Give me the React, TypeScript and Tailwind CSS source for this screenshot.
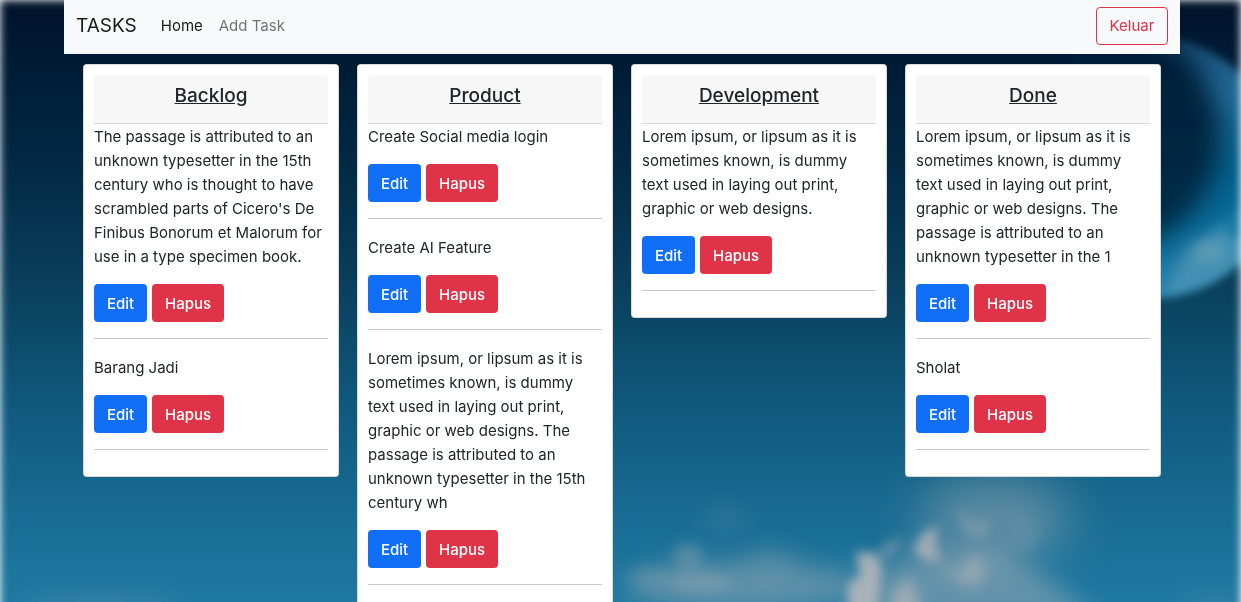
type Column = { title: string; tasks: string[] };

const columns: Column[] = [
  {
    title: "Backlog",
    tasks: [
      "The passage is attributed to an unknown typesetter in the 15th century who is thought to have scrambled parts of Cicero's De Finibus Bonorum et Malorum for use in a type specimen book.",
      "Barang Jadi",
    ],
  },
  {
    title: "Product",
    tasks: [
      "Create Social media login",
      "Create AI Feature",
      "Lorem ipsum, or lipsum as it is sometimes known, is dummy text used in laying out print, graphic or web designs. The passage is attributed to an unknown typesetter in the 15th century wh",
    ],
  },
  {
    title: "Development",
    tasks: [
      "Lorem ipsum, or lipsum as it is sometimes known, is dummy text used in laying out print, graphic or web designs.",
    ],
  },
  {
    title: "Done",
    tasks: [
      "Lorem ipsum, or lipsum as it is sometimes known, is dummy text used in laying out print, graphic or web designs. The passage is attributed to an unknown typesetter in the 1",
      "Sholat",
    ],
  },
];

function NightSky() {
  return (
    <div className="fixed inset-0 -z-10 overflow-hidden bg-white" aria-hidden="true">
      <svg
        className="absolute inset-x-0 top-0 h-[calc(100%+20px)] w-full blur-[4px]"
        viewBox="0 0 1241 622"
        preserveAspectRatio="none"
      >
        <defs>
          <linearGradient id="sky" x1="0" y1="0" x2="0" y2="1">
            <stop offset="0" stopColor="#00132b" />
            <stop offset="0.1" stopColor="#001b34" />
            <stop offset="0.27" stopColor="#032a46" />
            <stop offset="0.48" stopColor="#0a425f" />
            <stop offset="0.64" stopColor="#0f587c" />
            <stop offset="0.8" stopColor="#17698f" />
            <stop offset="1" stopColor="#217ca6" />
          </linearGradient>
          <linearGradient id="moon" x1="0" y1="0" x2="0" y2="1">
            <stop offset="0" stopColor="#154a72" />
            <stop offset="0.22" stopColor="#236c98" />
            <stop offset="0.5" stopColor="#02608c" />
            <stop offset="0.7" stopColor="#0a6c98" />
            <stop offset="1" stopColor="#2f86b0" />
          </linearGradient>
          <linearGradient id="shade" x1="0" y1="0" x2="0" y2="1">
            <stop offset="0" stopColor="#001a33" />
            <stop offset="1" stopColor="#06304c" />
          </linearGradient>
          <clipPath id="disc">
            <circle cx="1150" cy="168" r="131" />
          </clipPath>
          <filter id="soft3" filterUnits="userSpaceOnUse" x="0" y="0" width="1300" height="700">
            <feGaussianBlur stdDeviation="3" />
          </filter>
          <filter id="soft6" filterUnits="userSpaceOnUse" x="0" y="0" width="1300" height="700">
            <feGaussianBlur stdDeviation="6" />
          </filter>
          <filter id="soft12" filterUnits="userSpaceOnUse" x="0" y="0" width="1300" height="700">
            <feGaussianBlur stdDeviation="12" />
          </filter>
          <filter id="soft25" filterUnits="userSpaceOnUse" x="0" y="0" width="1300" height="700">
            <feGaussianBlur stdDeviation="25" />
          </filter>
        </defs>
        <rect width="1241" height="622" fill="url(#sky)" />
        <g clipPath="url(#disc)">
          <rect x="1010" y="30" width="290" height="280" fill="url(#moon)" />
          <path d="M1160 300L1185 250L1215 230L1260 205V265L1210 290Z" fill="#4390b4" filter="url(#soft6)" />
          <ellipse cx="1209" cy="252" rx="15" ry="11" fill="#6ba2b6" opacity=".7" filter="url(#soft6)" />
          <ellipse cx="1235" cy="228" rx="7" ry="10" fill="#0f75a0" filter="url(#soft3)" />
          <circle cx="1103" cy="136" r="117" fill="url(#shade)" filter="url(#soft12)" />
        </g>
        <g fill="#a4adb4">
          <ellipse cx="100" cy="608" rx="80" ry="12" opacity=".2" filter="url(#soft12)" />
          <ellipse cx="745" cy="586" rx="120" ry="24" opacity=".48" filter="url(#soft12)" />
          <ellipse cx="688" cy="556" rx="15" ry="13" opacity=".38" filter="url(#soft6)" />
          <ellipse cx="700" cy="582" rx="32" ry="10" opacity=".35" filter="url(#soft6)" />
          <ellipse cx="650" cy="576" rx="24" ry="9" opacity=".22" filter="url(#soft6)" />
          <ellipse cx="770" cy="562" rx="28" ry="12" opacity=".28" filter="url(#soft12)" />
          <ellipse cx="725" cy="518" rx="18" ry="9" opacity=".25" filter="url(#soft12)" />
          <ellipse cx="995" cy="518" rx="75" ry="40" opacity=".52" filter="url(#soft25)" />
          <path d="M850 622L870 572L930 548L1000 545L1065 592L1100 622Z" opacity=".5" filter="url(#soft12)" />
          <path d="M848 640L848 584L860 576L856 552L874 553L882 566L874 640Z" fill="#b5b7bb" opacity=".9" filter="url(#soft3)" />
          <path d="M886 640L894 592L910 576L918 600L926 640Z" fill="#b0b4b9" opacity=".8" filter="url(#soft6)" />
          <path d="M876 554L888 541L906 536L894 553L880 563Z" opacity=".45" filter="url(#soft3)" />
          <path d="M912 550L922 533L938 525L936 544L940 559L928 562Z" fill="#b0b3ba" opacity=".85" filter="url(#soft3)" />
          <path d="M932 560L960 574L975 552L986 568L980 586L960 584Z" fill="#aeb3b9" opacity=".65" filter="url(#soft6)" />
          <path d="M954 506L974 522L991 518L984 538L966 534Z" opacity=".38" filter="url(#soft3)" />
          <ellipse cx="1025" cy="535" rx="15" ry="18" opacity=".16" filter="url(#soft6)" />
          <ellipse cx="1215" cy="606" rx="40" ry="8" opacity=".2" filter="url(#soft12)" />
        </g>
      </svg>
    </div>
  );
}

function Navbar() {
  return (
    <nav className="flex items-center bg-[#f8f9fa] px-3 pt-[7px] pb-[9px]">
      <a href="#" className="mr-4 text-[19px] leading-[30px] text-black/90">
        TASKS
      </a>
      <ul className="flex flex-1 items-center">
        <li>
          <a href="#" className="px-2 text-black/90" aria-current="page">
            Home
          </a>
        </li>
        <li>
          <a href="#" className="px-2 text-black/55">
            Add Task
          </a>
        </li>
      </ul>
      <button
        type="button"
        className="h-[38px] w-[72px] rounded border border-[#e03348] text-center text-[#e03348]"
      >
        Keluar
      </button>
    </nav>
  );
}

function Task({ text }: { text: string }) {
  return (
    <li>
      <p className="mb-[15px] pt-px">{text}</p>
      <div className="flex gap-[5px] font-medium text-white">
        <button type="button" className="h-[38px] w-[53px] rounded bg-[#106ff6] pt-px">
          Edit
        </button>
        <button type="button" className="h-[38px] w-[72px] rounded bg-[#e03348] pt-px">
          Hapus
        </button>
      </div>
      <hr className="my-4 border-[#c8c9ca]" />
    </li>
  );
}

function Card({ column }: { column: Column }) {
  return (
    <section className="rounded border border-black/15 bg-white bg-clip-border p-[10px]">
      <header className="rounded-t-[3px] border-b border-[#d8d8d8] bg-[#f7f7f7] px-4 pt-[9px] pb-[15px]">
        <h5 className="text-center text-[19px] leading-6 font-medium underline">{column.title}</h5>
      </header>
      <ul>
        {column.tasks.map((text) => (
          <Task key={text} text={text} />
        ))}
      </ul>
    </section>
  );
}

export default function App() {
  return (
    <div className="relative isolate h-screen overflow-hidden pr-[61px] pl-16 font-['Inter','Liberation_Sans',sans-serif] text-[15px] leading-6 text-[#212529]">
      <NightSky />
      <Navbar />
      <main className="grid grid-cols-4 items-start gap-[18px] px-[19px] py-[10px]">
        {columns.map((column) => (
          <Card key={column.title} column={column} />
        ))}
      </main>
    </div>
  );
}
